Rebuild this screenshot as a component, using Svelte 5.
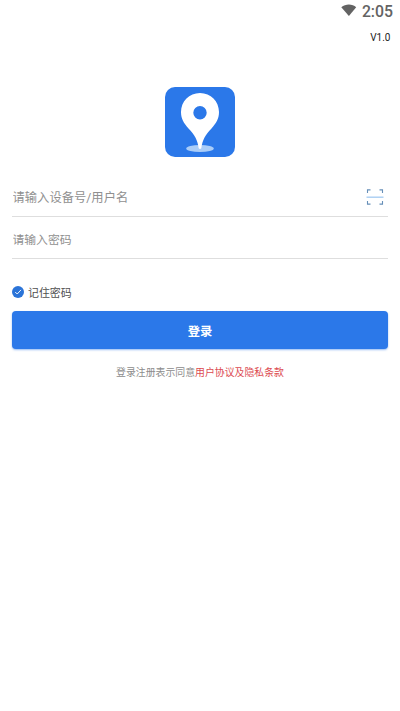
<script lang="ts">
  let username = $state('');
  let password = $state('');
  let remember = $state(true);
</script>

<div class="page">
  <header class="status">
    <svg class="wifi" viewBox="0 0 16 12" aria-hidden="true">
      <path d="M0.3 3.2C4.5-0.4 11.4-0.4 15.2 3.2L7.9 11.9Z" />
    </svg>
    <span class="time">2:05</span>
  </header>
  <div class="version">V1.0</div>

  <svg class="logo" viewBox="0 0 70 70" aria-hidden="true">
    <rect width="70" height="70" rx="10" fill="#2b78e9" />
    <ellipse cx="35" cy="61.5" rx="13.8" ry="3.6" fill="#aacdf8" />
    <path
      fill="#fff"
      fill-rule="evenodd"
      d="M35 6C24.2 6 16 14.4 16 25C16 32 18.8 36 23.5 41.5C29.5 48 32.6 52.5 33.7 61.3Q35 62.6 36.3 61.3C37.4 52.5 40.5 48 46.5 41.5C51.2 36 54 32 54 25C54 14.4 45.8 6 35 6ZM35 19A6.7 6.7 0 1 1 35 32.4A6.7 6.7 0 1 1 35 19Z"
    />
  </svg>

  <form onsubmit={(e) => e.preventDefault()}>
    <div class="field">
      <input type="text" placeholder="请输入设备号/用户名" bind:value={username} />
      <button type="button" class="scan" aria-label="扫码">
        <svg viewBox="0 0 18 16">
          <path class="corner" d="M1.5 4V0.9H4.5M13.5 0.9H16.5V4M1.5 12V15.1H4.5M13.5 15.1H16.5V12" />
          <path class="line" d="M0.5 8.2H17.5" />
        </svg>
      </button>
    </div>
    <div class="field">
      <input class="password" type="password" placeholder="请输入密码" bind:value={password} />
    </div>

    <button
      type="button"
      class="remember"
      role="checkbox"
      aria-checked={remember}
      onclick={() => (remember = !remember)}
    >
      <svg viewBox="0 0 12 12">
        <circle cx="6" cy="6" r="6" fill={remember ? '#2b74d8' : '#ccc'} />
        <path d="M3.2 6L5.2 8L9 3.9" />
      </svg>
      <span>记住密码</span>
    </button>

    <button type="submit" class="login">登录</button>
  </form>

  <p class="terms">登录注册表示同意<span>用户协议及隐私条款</span></p>
</div>

<style>
  :global(body) {
    background: #fff;
  }

  .page {
    display: flex;
    flex-direction: column;
    min-height: 711px;
    box-sizing: border-box;
    padding: 0 12px;
    font-family: Roboto, 'Noto Sans CJK SC', sans-serif;
    background: #fff;
  }

  .status {
    display: flex;
    justify-content: flex-end;
    align-items: center;
    gap: 5px;
    height: 23px;
    margin-right: -5px;
    color: #636363;
  }

  .wifi {
    width: 16px;
    height: 12px;
    margin-bottom: 4px;
    fill: #636363;
  }

  .time {
    padding-top: 1px;
    font-size: 15.8px;
    font-weight: 500;
    line-height: 22px;
  }

  .version {
    height: 14px;
    margin: 8px -2.5px 0 0;
    font-size: 10px;
    line-height: 14px;
    text-align: right;
    color: #222;
  }

  .logo {
    width: 70px;
    height: 70px;
    margin: 42.3px auto 0;
  }

  form {
    display: flex;
    flex-direction: column;
    margin-top: 17.7px;
  }

  button {
    padding: 0;
    border: 0;
    background: none;
    font-family: inherit;
    cursor: pointer;
  }

  .field {
    display: flex;
    align-items: center;
    height: 42px;
    box-sizing: border-box;
    padding: 3px 4px 0 0.5px;
    border-bottom: 1px solid #dedede;
  }

  input {
    flex: 1;
    min-width: 0;
    padding: 3px 0 0;
    border: 0;
    outline: none;
    background: none;
    font-family: inherit;
    font-size: 12.3px;
    color: #333;
  }

  .password {
    font-size: 11.8px;
  }

  input::placeholder {
    color: #909090;
    opacity: 1;
  }

  .scan {
    display: flex;
  }

  .scan svg {
    width: 18px;
    height: 16px;
    fill: none;
  }

  .corner {
    stroke: #668fb8;
    stroke-width: 1.1;
  }

  .line {
    stroke: #a9cdf2;
    stroke-width: 1.4;
  }

  .remember {
    display: flex;
    align-items: center;
    align-self: flex-start;
    gap: 4px;
    height: 16px;
    margin-top: 25px;
    font-size: 10.9px;
    line-height: 16px;
    color: #505050;
  }

  .remember span {
    padding-top: 4px;
  }

  .remember svg {
    width: 12px;
    height: 12px;
  }

  .remember path {
    fill: none;
    stroke: #fff;
    stroke-width: 0.9;
  }

  .login {
    height: 38px;
    margin-top: 11.4px;
    padding-top: 1px;
    border-radius: 4px;
    background: #2b78e9;
    box-shadow: 0 1px 2px rgba(43, 120, 233, 0.5);
    font-size: 12.3px;
    font-weight: 700;
    color: #fff;
  }

  .terms {
    margin: 15.6px 0 0;
    font-size: 9.9px;
    line-height: 16px;
    text-align: center;
    color: #8c8c8c;
  }

  .terms span {
    color: #dc4a50;
  }
</style>
